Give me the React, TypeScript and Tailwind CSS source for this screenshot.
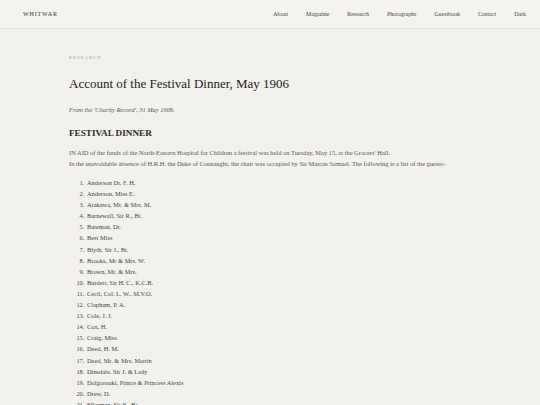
const navItems = ["About", "Magazine", "Research", "Photographs", "Guestbook", "Contact", "Dark"]

const guests = [
  "Anderson Dr. F. H.",
  "Anderson, Miss E.",
  "Arakawa, Mr. & Mrs. M.",
  "Barnewall, Sir R., Bt.",
  "Bateman, Dr.",
  "Best Miss",
  "Blyth, Sir J., Bt.",
  "Brooks, Mr & Mrs. W.",
  "Brown, Mr. & Mrs.",
  "Burdett, Sir H. C., K.C.B.",
  "Cecil, Col. L. W., M.V.O.",
  "Clapham, P. A.",
  "Cole, J. J.",
  "Cox, H.",
  "Craig, Miss.",
  "Deed, H. M.",
  "Deed, Mr. & Mrs. Martin",
  "Dinsdale, Sir J. & Lady",
  "Dolgorouki, Prince & Princess Alexis",
  "Drew, D.",
  "Ellerman, Sir E., Bt.",
]

export default function App() {
  return (
    <div className="min-h-screen bg-[#f2f1ee] text-[#2a2a2a]" style={{ fontFamily: '"Liberation Serif", "DejaVu Serif", serif' }}>
      <header className="flex h-[29px] items-center justify-between border-b border-[#e4e2dd] bg-[#f4f3f0] pl-[23px] pr-[14px]">
        <div className="text-[6px] tracking-[0.14em] text-[#333]">WHITWAR</div>
        <nav className="flex gap-[18px] text-[5.9px] text-[#444]">
          {navItems.map((item) => (
            <a key={item} href="#">
              {item}
            </a>
          ))}
        </nav>
      </header>

      <main className="mx-auto w-[402px] pt-[25px]">
        <div className="text-[4.5px] leading-[8px] tracking-[0.25em] text-[#999]">RESEARCH</div>
        <h1 className="mt-[14px] text-[13px] leading-[16px] text-[#222]">Account of the Festival Dinner, May 1906</h1>
        <p className="mt-[14px] text-[6.4px] italic leading-[8px] text-[#555]">
          From the 'Charity Record', 31 May 1906.
        </p>
        <h2 className="mt-[14px] text-[9.2px] font-bold leading-[10px] text-[#2a2a2a]">FESTIVAL DINNER</h2>
        <div className="mt-[9px] text-[6.45px] leading-[11px] text-[#555]">
          <p>
            IN AID of the funds of the North-Eastern Hospital for Children a festival was held on Tuesday, May 15, at the
            Grocers' Hall.
          </p>
          <p>
            In the unavoidable absence of H.R.H. the Duke of Connaught, the chair was occupied by Sir Marcus Samuel. The
            following is a list of the guests:-
          </p>
        </div>
        <ol className="mt-[8px] list-decimal pl-[17px] text-[6.4px] leading-[11.1px] text-[#444]">
          {guests.map((g) => (
            <li key={g} className="pl-[1px]">
              {g}
            </li>
          ))}
        </ol>
      </main>
    </div>
  )
}
